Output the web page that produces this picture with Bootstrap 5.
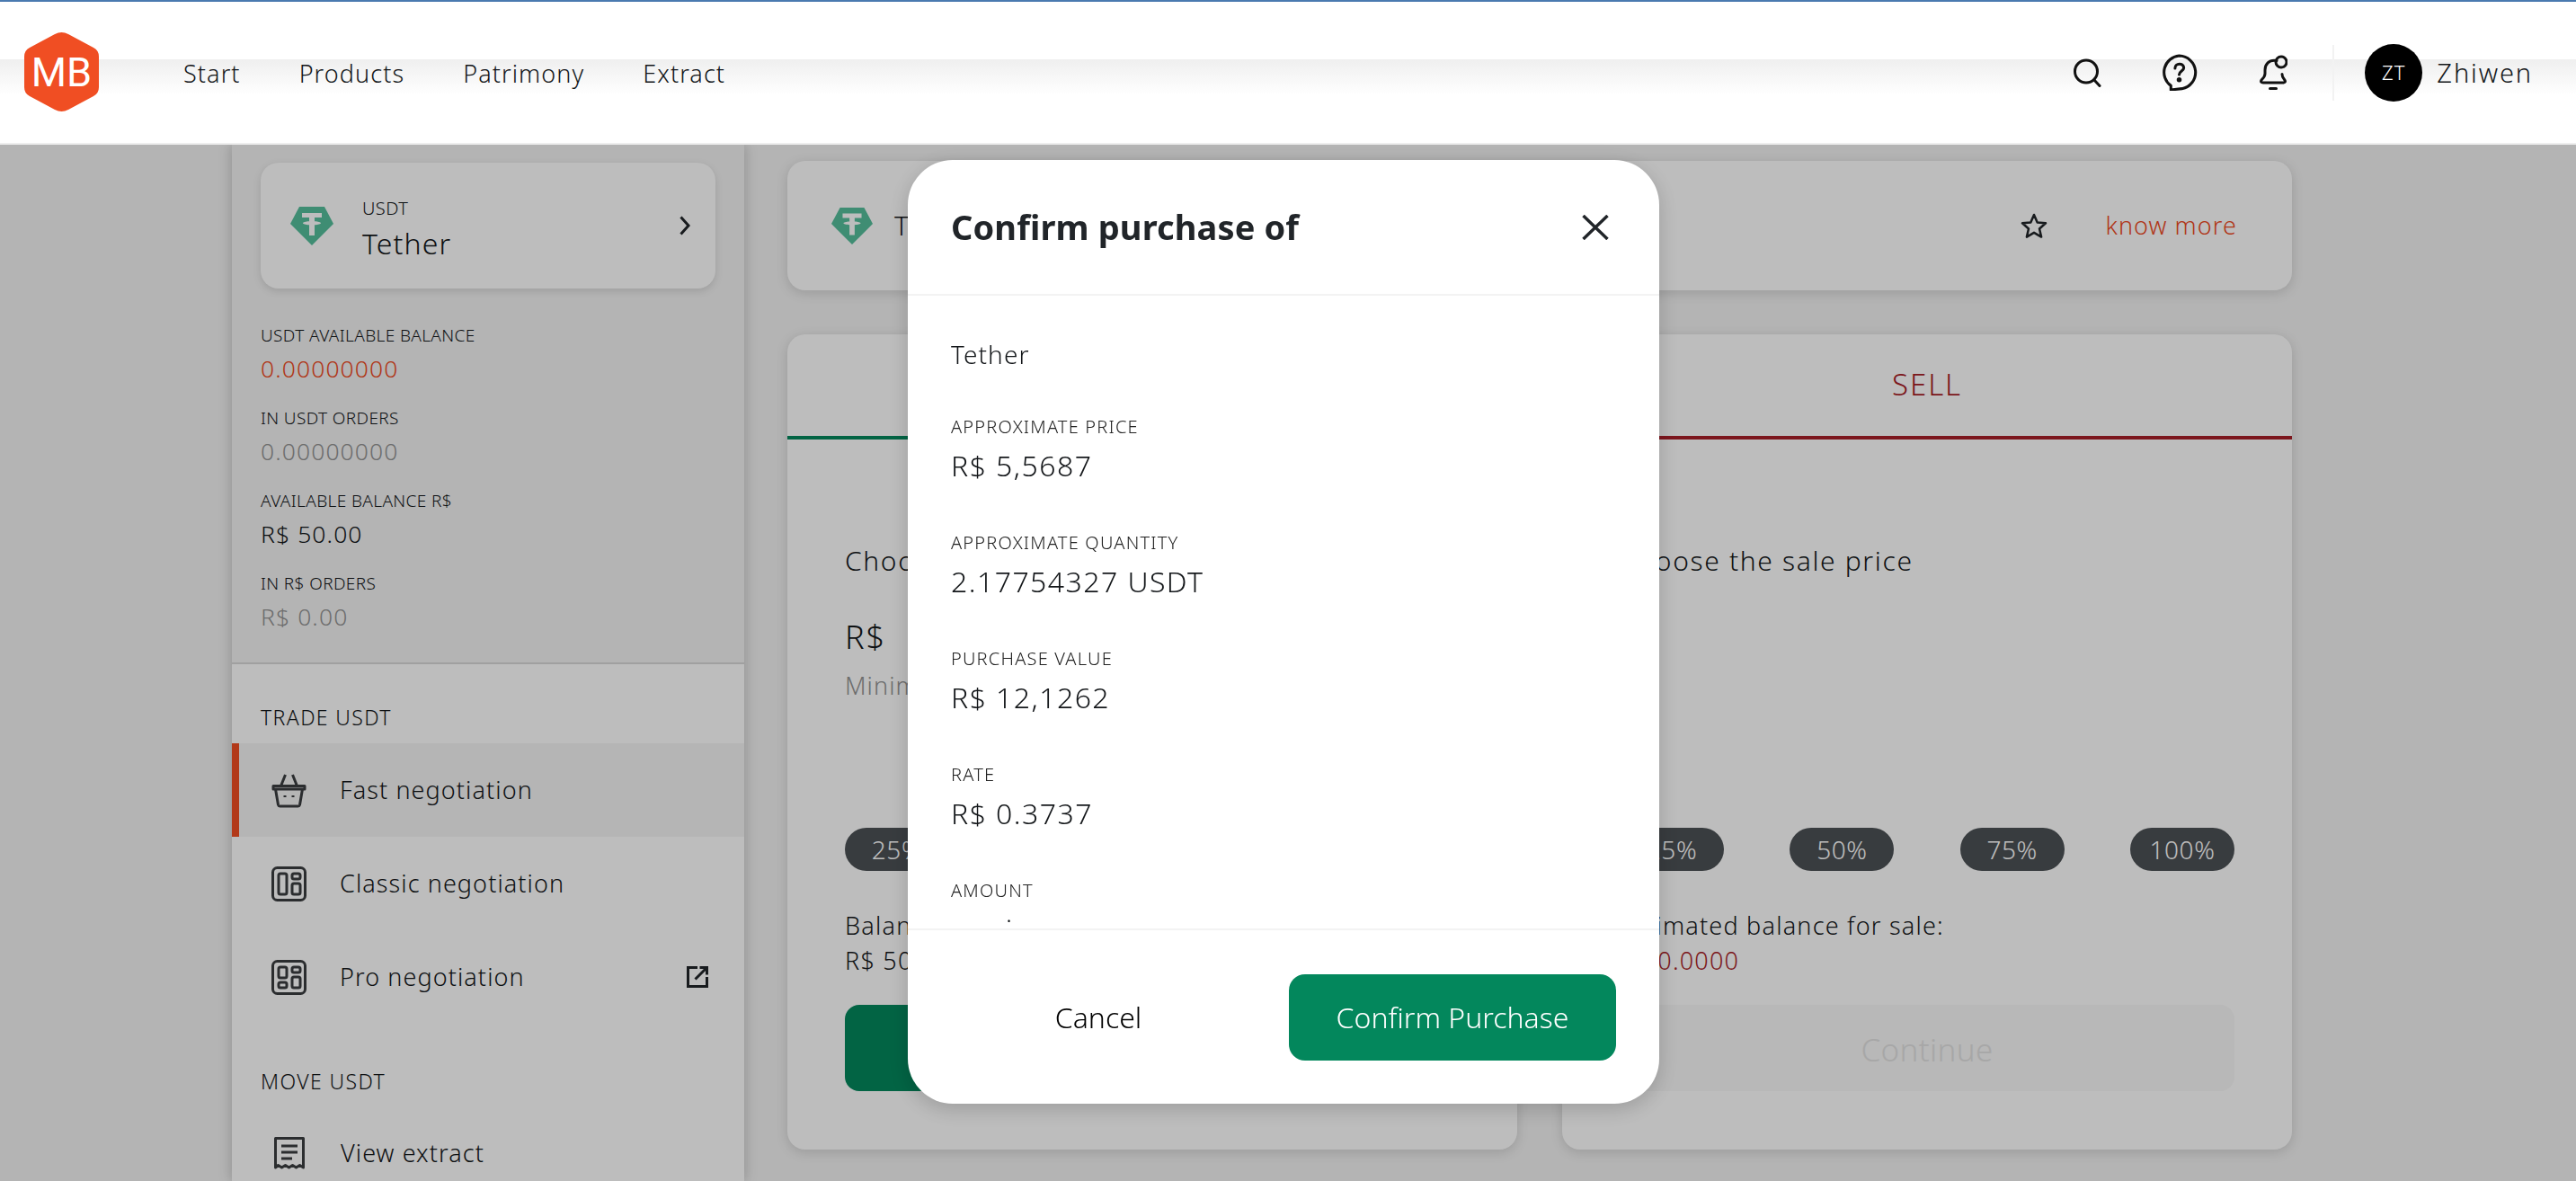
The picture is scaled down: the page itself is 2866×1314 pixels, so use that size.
<!DOCTYPE html>
<html lang="en">

<head>
  <meta charset="UTF-8" />
  <meta name="viewport" content="width=device-width, initial-scale=1" />
  <title>Confirm purchase - Tether</title>
  <link href="https://cdn.jsdelivr.net/npm/bootstrap@5.3.0/dist/css/bootstrap.min.css" rel="stylesheet" />
  <style>
    body {
      background: #f3f3f3;
      font-family: "Noto Sans", Roboto, sans-serif;
      font-size: 27px;
      font-weight: 300;
      letter-spacing: .04em;
      color: #14171a;
      height: 1314px;
      overflow: hidden;
    }

    /* header */
    .top-bar {
      position: relative;
      z-index: 3;
      height: 161px;
      padding: 0 48px 0 27px;
      border-top: 2px solid #4a7ab0;
      border-bottom: 2px solid #eee;
      background: linear-gradient(#fff 0 64px, #efefef 64px, #fff 104px);
      flex-wrap: nowrap;
    }

    .logo-mark {
      width: 83px;
      height: 90px;
      margin-right: 94px;
      margin-top: -2px;
    }

    .top-links {
      gap: 65px;
      padding-top: 2px;
    }

    .top-links a {
      padding: 0 !important;
      color: #14171a;
      font-size: 27px;
      line-height: 36px;
    }

    .icon-slot {
      display: block;
      color: #111;
    }

    .top-divider {
      width: 2px;
      height: 62px;
      background: #f2f2f2;
      margin: 0 34px 0 50px;
    }

    .user-circle {
      width: 64px;
      height: 64px;
      background: #000;
      color: #fff;
      font-size: 22px;
    }

    .user-name {
      font-size: 29px;
      letter-spacing: .065em;
      margin-left: 16px;
    }

    /* page */
    .page-wrap {
      padding-left: 258px;
      width: 2550px;
      box-sizing: border-box;
    }

    .side-col {
      width: 570px;
      flex: none;
      height: 1153px;
      box-shadow: 0 0 14px rgba(0, 0, 0, .22);
    }

    .side-top {
      padding: 20px 32px 33px;
      border-bottom: 2px solid #d8d8d8;
    }

    .coin-card {
      height: 140px;
      border: 0;
      border-radius: 20px;
      margin-bottom: 40px;
      padding: 0 28px 0 33px;
      box-shadow: 0 3px 10px rgba(0, 0, 0, .12);
    }

    .coin-sym {
      font-size: 20px;
      line-height: 24px;
      margin-top: 2px;
      letter-spacing: .02em;
    }

    .coin-name {
      font-size: 32px;
      line-height: 42px;
      margin-top: 6px;
      margin-bottom: -8px;
    }

    .stat-label {
      font-size: 19px;
      line-height: 24px;
      margin-top: 25px;
      letter-spacing: .02em;
    }

    .stat-value {
      font-size: 26.500px;
      line-height: 36px;
      margin-top: 7px;
    }

    .tone-red {
      color: #ee4a1e;
    }

    .tone-muted {
      color: #939393;
    }

    .side-bottom {
      background: #fff;
      height: 600px;
    }

    .group-title {
      font-size: 23px;
      line-height: 30px;
      letter-spacing: .06em;
      padding: 44px 32px 14px;
    }

    .group-title.next-group {
      padding-top: 49px;
      padding-bottom: 13px;
    }

    .list-group-flush>.menu-row {
      height: 104px;
      border: 0;
      border-left: 8px solid transparent;
      padding: 0 40px 0 36px;
      font-size: 27px;
      background: transparent;
      color: #14171a;
    }

    .list-group-flush>.menu-row.is-on {
      border-left-color: #f04e23;
      background: #f4f4f4;
    }

    .menu-row svg.lead-icon {
      margin-right: 37px;
      flex: none;
    }

    .main-col {
      padding: 18px 0 0 48px;
    }

    .info-card {
      height: 144px;
      border: 0;
      border-radius: 20px;
      padding: 0 61px 0 49px;
      margin-bottom: 49px;
      box-shadow: 0 3px 14px rgba(0, 0, 0, .14);
    }

    .know-link {
      color: #ee4a1e;
      text-decoration: none;
      font-size: 27px;
      margin-left: 64px;
    }

    .trade-cols {
      gap: 50px;
    }

    .trade-card {
      flex: 1 1 0;
      height: 907px;
      border: 0;
      border-radius: 20px;
      overflow: hidden;
      box-shadow: 0 3px 14px rgba(0, 0, 0, .14);
    }

    .trade-tab {
      height: 117px;
      padding-top: 36px;
      text-align: center;
      font-size: 33px;
      line-height: 40px;
      letter-spacing: .06em;
      border-bottom: 4px solid;
    }

    .tab-buy {
      color: #03875c;
      border-color: #03875c;
    }

    .tab-sell {
      color: #a81e28;
      border-color: #a81e28;
    }

    .trade-body {
      padding: 115px 64px 0;
    }

    .trade-line {
      font-size: 30px;
      line-height: 40px;
      letter-spacing: .055em;
    }

    .price-area {
      height: 277px;
      padding-top: 40px;
    }

    .price-sign {
      font-size: 36px;
      line-height: 50px;
      letter-spacing: .05em;
    }

    .price-min {
      font-size: 27px;
      line-height: 36px;
      margin-top: 11px;
      color: #939393;
    }

    .pct-pill {
      width: 116px;
      height: 48px;
      line-height: 48px;
      padding: 0;
      background: #4c5155;
      color: #fff;
      font-size: 28px;
      font-weight: 300;
      letter-spacing: .02em;
      border-radius: 24px;
    }

    .bal-text {
      font-size: 27px;
      line-height: 39px;
      margin-top: 41px;
      letter-spacing: .045em;
    }

    .tone-wine {
      color: #a81e28;
    }

    .go-btn {
      width: 100%;
      height: 96px;
      margin-top: 30px;
      border: 0;
      border-radius: 16px;
      font-size: 35px;
      font-weight: 300;
      letter-spacing: .01em;
      padding-top: 10px;
      opacity: 1 !important;
    }

    .go-btn.is-green {
      background: #03875c;
      color: #fff;
    }

    .go-btn.is-off {
      background: #f8f8f8;
      color: #e2e2e2;
    }

    /* dim layer and dialog */
    .dim-layer {
      position: fixed;
      left: 0;
      right: 0;
      top: 161px;
      bottom: 0;
      z-index: 2;
      background: rgba(0, 0, 0, .26);
    }

    .confirm-box {
      position: fixed;
      left: 1010px;
      top: 178px;
      width: 836px;
      height: 1050px;
      z-index: 4;
      border: 0;
      border-radius: 50px;
      box-shadow: 0 6px 24px rgba(0, 0, 0, .18);
      overflow: hidden;
    }

    .confirm-head {
      height: 151px;
      padding: 0 56px 0 48px;
      border-bottom: 2px solid #f3f3f3;
      flex: none;
    }

    .confirm-title {
      font-size: 38px;
      font-weight: 700;
      letter-spacing: .003em;
      margin: 0;
      color: #212529;
    }

    .confirm-body {
      height: 704px;
      flex: none;
      overflow: hidden;
      padding: 45px 48px 0;
    }

    .body-name {
      font-size: 28px;
      line-height: 40px;
      margin-bottom: 48px;
    }

    .body-label {
      font-size: 20px;
      line-height: 26px;
      letter-spacing: .06em;
      color: #222;
    }

    .body-value {
      font-size: 32px;
      line-height: 42px;
      margin: 9px 0 52px;
      letter-spacing: .045em;
    }

    .dot-value {
      padding-left: 62px;
    }

    .confirm-foot {
      border-top: 2px solid #f3f3f3;
      padding: 49px 48px 0;
      flex: none;
    }

    .foot-cancel {
      width: 328px;
      height: 96px;
      font-size: 32px;
      font-weight: 300;
      color: #000;
      border: 0;
      background: none;
    }

    .foot-ok {
      width: 364px;
      height: 96px;
      font-size: 32px;
      font-weight: 300;
      color: #fff;
      background: #03875c;
      border: 0;
      border-radius: 18px;
      padding: 0;
    }
  </style>
</head>

<body>
  <nav class="navbar top-bar d-flex align-items-center">
    <svg class="logo-mark" viewBox="0 0 83 90">
      <path d="M34 3Q41.500-1 49 3L77 18Q83 21 83 28V62Q83 69 77 72L49 87Q41.500 91 34 87L6 72Q0 69 0 62V28Q0 21 6 18Z" fill="#f04e23" />
      <text x="41.500" y="61" text-anchor="middle" font-family="Roboto, sans-serif" font-size="45" font-weight="400" fill="#fff" letter-spacing="0">MB</text>
    </svg>
    <ul class="navbar-nav flex-row top-links me-auto">
      <li class="nav-item"><a class="nav-link" href="#">Start</a></li>
      <li class="nav-item"><a class="nav-link" href="#">Products</a></li>
      <li class="nav-item"><a class="nav-link" href="#">Patrimony</a></li>
      <li class="nav-item"><a class="nav-link" href="#">Extract</a></li>
    </ul>
    <div class="d-flex align-items-center">
      <svg class="icon-slot" style="margin-right:66px" width="32" height="32" viewBox="0 0 32 32" fill="none" stroke="currentColor" stroke-width="3" stroke-linecap="round">
        <circle cx="15" cy="14.500" r="12.500" /><path d="M24 24l6 6.500" />
      </svg>
      <svg class="icon-slot" style="margin-right:68px" width="41" height="41" viewBox="0 0 40 40" fill="none" stroke="currentColor" stroke-width="3" stroke-linejoin="round">
        <path d="M20 2a18 18 0 0 1 3 35.700L11 39v-4.500A18 18 0 0 1 20 2z" />
        <path d="M15.500 15.500c0-6 9.500-6 9.500-.5 0 3.500-5 3.500-5 7.500" stroke-linecap="round" /><circle cx="20" cy="28" r="1.200" fill="currentColor" />
      </svg>
      <svg class="icon-slot" width="32" height="39" viewBox="0 0 32 39" fill="none" stroke="currentColor" stroke-width="3" stroke-linecap="round" stroke-linejoin="round">
        <path d="M20 6.500C11 5 7 11 7 17v4c0 3-1 4-3.500 6.500C1.500 30 3 31 5 31h22c2 0 3.500-1 1.500-3.500-1.700-2-2.500-3-2.500-6" />
        <circle cx="25" cy="8" r="6" /><path d="M12.500 37.500h7" />
      </svg>
      <div class="top-divider"></div>
      <div class="user-circle rounded-circle d-flex align-items-center justify-content-center">ZT</div>
      <span class="user-name">Zhiwen</span>
    </div>
  </nav>

  <div class="page-wrap d-flex">
    <aside class="side-col">
      <div class="side-top">
        <div class="card coin-card flex-row align-items-center">
          <svg width="48" height="43" viewBox="0 0 48 43">
            <path d="M10 0H38L48 19 24 43 0 19Z" fill="#55bf9b" />
            <path d="M13 7H35V12H27V16.200C31 16.400 34 17.200 34 18.200S31 20 27 20.200V32H21V20.200C17 20 14 19.200 14 18.200S17 16.400 21 16.200V12H13Z" fill="#fff" />
          </svg>
          <div class="flex-grow-1" style="padding-left:32px">
            <div class="coin-sym">USDT</div>
            <div class="coin-name">Tether</div>
          </div>
          <svg width="12" height="22" viewBox="0 0 12 22" fill="none" stroke="#212529" stroke-width="3">
            <path d="M1.500 1.500l8.500 9.500-8.500 9.500" />
          </svg>
        </div>
        <div class="stat-label" style="margin-top:0">USDT AVAILABLE BALANCE</div>
        <div class="stat-value tone-red">0.00000000</div>
        <div class="stat-label">IN USDT ORDERS</div>
        <div class="stat-value tone-muted">0.00000000</div>
        <div class="stat-label">AVAILABLE BALANCE R$</div>
        <div class="stat-value">R$ 50.00</div>
        <div class="stat-label">IN R$ ORDERS</div>
        <div class="stat-value tone-muted">R$ 0.00</div>
      </div>
      <div class="side-bottom">
        <div class="group-title">TRADE USDT</div>
        <div class="list-group list-group-flush">
          <a href="#" class="list-group-item menu-row is-on d-flex align-items-center">
            <svg class="lead-icon" width="39" height="39" viewBox="0 0 39 39" fill="none" stroke="#3a3d40" stroke-width="3" stroke-linejoin="round">
              <path d="M2 14.500h35v3.500H2zM4.500 18l3 17.500a2 2 0 0 0 2 1.500h20a2 2 0 0 0 2-1.500l3-17.500" />
              <path d="M10.500 14.500L15.500 2M28.500 14.500L23.500 2" /><path d="M15 25v2M24 25v2" />
            </svg>
            Fast negotiation
          </a>
          <a href="#" class="list-group-item menu-row d-flex align-items-center">
            <svg class="lead-icon" width="39" height="39" viewBox="0 0 39 39" fill="none" stroke="#3a3d40" stroke-width="3">
              <rect x="1.500" y="1.500" width="36" height="36" rx="5" />
              <rect x="8" y="8" width="9" height="23" rx="2" /><rect x="23" y="8" width="9" height="6" rx="2" /><rect x="23" y="19" width="9" height="12" rx="2" />
            </svg>
            Classic negotiation
          </a>
          <a href="#" class="list-group-item menu-row d-flex align-items-center">
            <svg class="lead-icon" width="39" height="39" viewBox="0 0 39 39" fill="none" stroke="#3a3d40" stroke-width="3">
              <rect x="1.500" y="1.500" width="36" height="36" rx="5" />
              <rect x="8" y="8" width="9" height="12" rx="2" /><rect x="23" y="8" width="9" height="6" rx="2" /><rect x="8" y="25" width="9" height="6" rx="2" /><rect x="23" y="19" width="9" height="12" rx="2" />
            </svg>
            Pro negotiation
            <svg class="ms-auto" width="24" height="24" viewBox="0 0 24 24" fill="none" stroke="#212529" stroke-width="3">
              <path d="M12 1.500H1.500v21h21V12M9.500 14.500L22 2M14.500 1.500h8v8" />
            </svg>
          </a>
        </div>
        <div class="group-title next-group">MOVE USDT</div>
        <div class="list-group list-group-flush">
          <a href="#" class="list-group-item menu-row d-flex align-items-center">
            <svg class="lead-icon" style="margin-left:3px;margin-right:40px" width="34" height="36" viewBox="0 0 34 36" fill="none" stroke="#3a3d40" stroke-width="3" stroke-linejoin="round">
              <path d="M1.500 34V1.500h31V34l-4-2.500-4 2.500-4-2.500-4 2.500-4-2.500-4 2.500-4-2.500z" />
              <path d="M8 10h18M8 17h18M8 24h12" />
            </svg>
            View extract
          </a>
        </div>
      </div>
    </aside>

    <main class="main-col flex-grow-1">
      <div class="card info-card flex-row align-items-center">
        <svg width="46" height="43" viewBox="0 0 48 43">
          <path d="M10 0H38L48 19 24 43 0 19Z" fill="#55bf9b" />
          <path d="M13 7H35V12H27V16.200C31 16.400 34 17.200 34 18.200S31 20 27 20.200V32H21V20.200C17 20 14 19.200 14 18.200S17 16.400 21 16.200V12H13Z" fill="#fff" />
        </svg>
        <span class="trade-line ms-4">Tether</span>
        <svg class="ms-auto" width="30" height="28" viewBox="0 0 30 28" fill="none" stroke="#212529" stroke-width="2.500" stroke-linejoin="round">
          <path d="M15 2l3.700 8.500 9.300.8-7 6.200 2.100 9.100L15 21.800l-8.100 4.800 2.100-9.100-7-6.200 9.300-.8z" />
        </svg>
        <a href="#" class="know-link">know more</a>
      </div>

      <div class="d-flex trade-cols">
        <section class="card trade-card">
          <div class="trade-tab tab-buy">BUY</div>
          <div class="trade-body">
            <div class="trade-line">Choose the purchase price</div>
            <div class="price-area">
              <div class="price-sign">R$</div>
              <div class="price-min">Minimum</div>
            </div>
            <div class="d-flex justify-content-between">
              <span class="badge pct-pill">25%</span>
              <span class="badge pct-pill">50%</span>
              <span class="badge pct-pill">75%</span>
              <span class="badge pct-pill">100%</span>
            </div>
            <div class="bal-text">Balance available:<br />R$ 50.00</div>
            <button class="btn go-btn is-green" type="button">Continue</button>
          </div>
        </section>

        <section class="card trade-card">
          <div class="trade-tab tab-sell">SELL</div>
          <div class="trade-body">
            <div class="trade-line">Choose the sale price</div>
            <div class="price-area"></div>
            <div class="d-flex justify-content-between">
              <span class="badge pct-pill">25%</span>
              <span class="badge pct-pill">50%</span>
              <span class="badge pct-pill">75%</span>
              <span class="badge pct-pill">100%</span>
            </div>
            <div class="bal-text">Estimated balance for sale:<br /><span class="tone-wine">R$ 0.0000</span></div>
            <button class="btn go-btn is-off" type="button" disabled>Continue</button>
          </div>
        </section>
      </div>
    </main>
  </div>

  <div class="dim-layer"></div>

  <div class="modal-content confirm-box bg-white">
    <div class="modal-header confirm-head d-flex justify-content-between align-items-center">
      <h5 class="confirm-title">Confirm purchase of</h5>
      <svg width="30" height="28" viewBox="0 0 30 28" fill="none" stroke="#212529" stroke-width="3.500">
        <path d="M1.500 1L28.500 27M28.500 1L1.500 27" />
      </svg>
    </div>
    <div class="modal-body confirm-body">
      <div class="body-name">Tether</div>
      <div class="body-label">APPROXIMATE PRICE</div>
      <div class="body-value">R$ 5,5687</div>
      <div class="body-label">APPROXIMATE QUANTITY</div>
      <div class="body-value">2.17754327 USDT</div>
      <div class="body-label">PURCHASE VALUE</div>
      <div class="body-value">R$ 12,1262</div>
      <div class="body-label">RATE</div>
      <div class="body-value">R$ 0.3737</div>
      <div class="body-label">AMOUNT</div>
      <div class="body-value dot-value">˙</div>
    </div>
    <div class="modal-footer confirm-foot d-flex justify-content-between align-items-start">
      <button class="btn foot-cancel m-0" type="button">Cancel</button>
      <button class="btn foot-ok m-0" type="button">Confirm Purchase</button>
    </div>
  </div>

  <script src="https://cdn.jsdelivr.net/npm/bootstrap@5.3.0/dist/js/bootstrap.bundle.min.js"></script>
</body>

</html>
